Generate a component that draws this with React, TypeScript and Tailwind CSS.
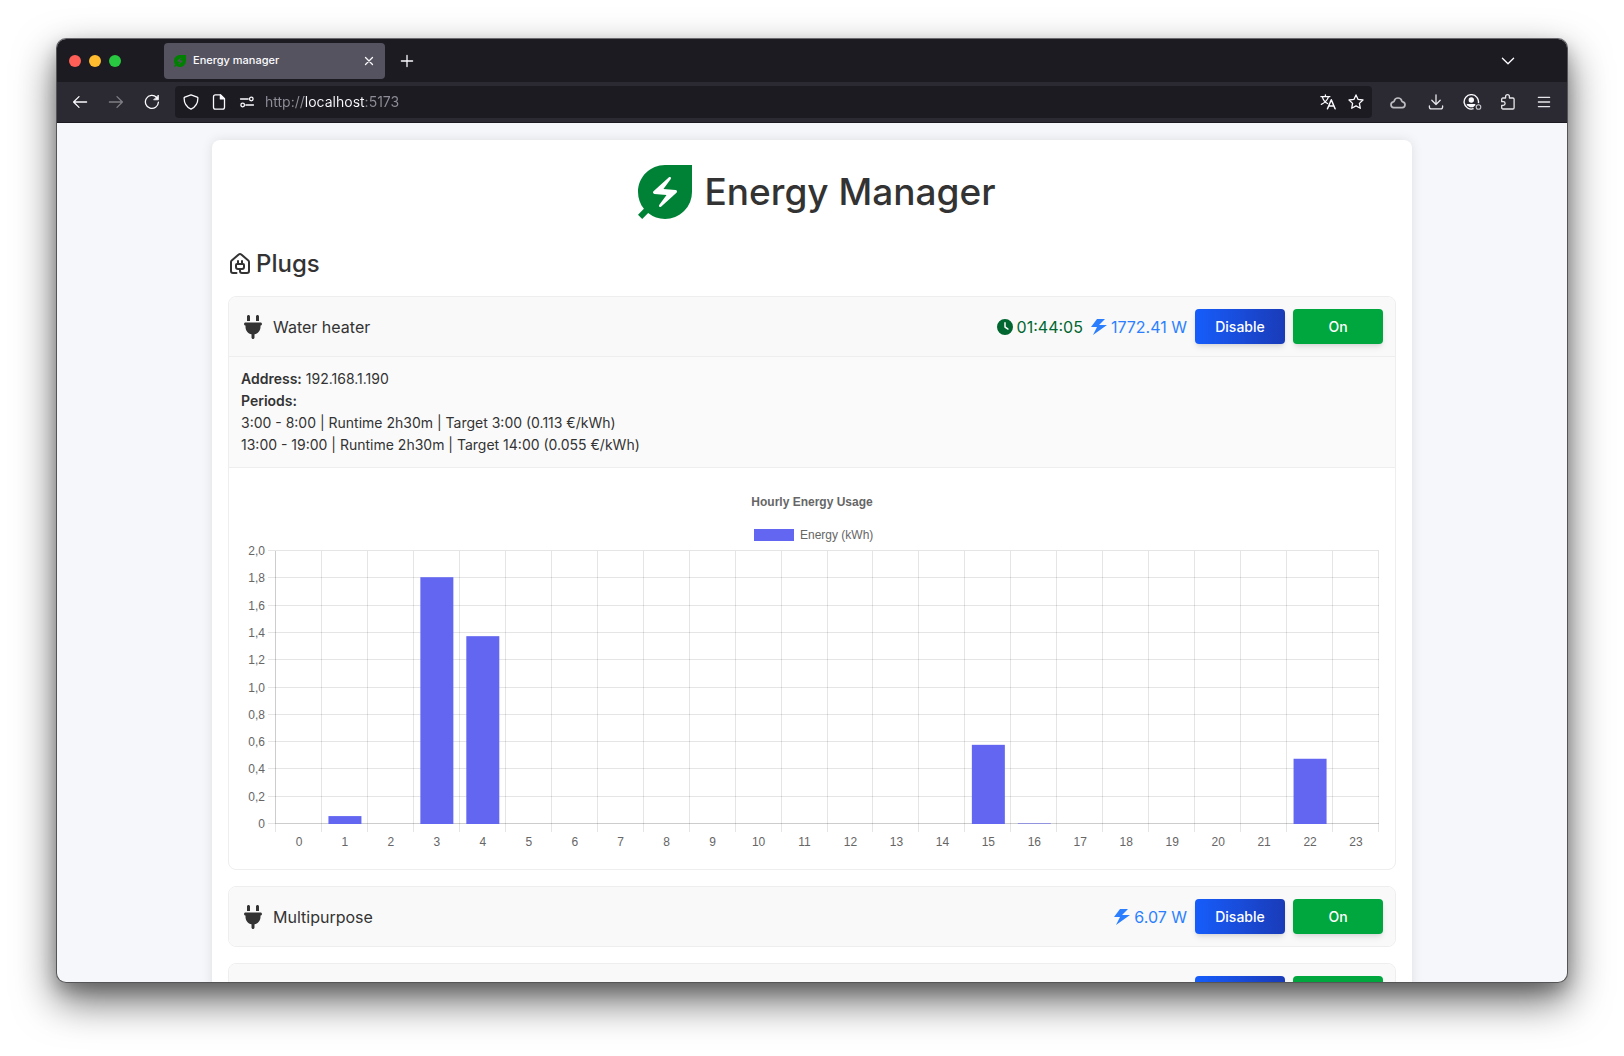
import { type ReactNode } from "react";
import { MdEnergySavingsLeaf } from "react-icons/md";
import { FaClock, FaPlug } from "react-icons/fa6";
import { ImPower } from "react-icons/im";
import { HousePlug } from "lucide-react";

function Glyph({ children, className = "" }: { children: ReactNode; className?: string }) {
  return (
    <svg
      viewBox="0 0 16 16"
      width="16"
      height="16"
      fill="none"
      stroke="currentColor"
      strokeWidth="1.3"
      strokeLinecap="round"
      strokeLinejoin="round"
      className={className}
      aria-hidden="true"
    >
      {children}
    </svg>
  );
}

function ToolButton({ label, children, className = "w-9" }: { label: string; children: ReactNode; className?: string }) {
  return (
    <button type="button" aria-label={label} className={`flex h-8 shrink-0 items-center justify-center text-[#fbfbfe] ${className}`}>
      {children}
    </button>
  );
}

function TabBar() {
  return (
    <div className="flex h-[43px] shrink-0 items-center bg-[#1c1b22] pl-3">
      <div className="flex w-[95px] shrink-0 gap-2">
        <button type="button" aria-label="Close window" className="size-3 rounded-full bg-[#ff5f57]" />
        <button type="button" aria-label="Minimise window" className="size-3 rounded-full bg-[#febc2e]" />
        <button type="button" aria-label="Zoom window" className="size-3 rounded-full bg-[#28c840]" />
      </div>
      <div className="flex h-9 w-[221px] items-center rounded bg-[#55535f] pr-2 pl-2">
        <MdEnergySavingsLeaf className="size-4 shrink-0 text-[#008000]" />
        <span className="ml-[5px] grow text-[11px] font-medium text-[#fbfbfe]">Energy manager</span>
        <button type="button" aria-label="Close tab" className="text-[#fbfbfe]">
          <Glyph>
            <path d="M4.5 4.5l7 7M11.5 4.5l-7 7" />
          </Glyph>
        </button>
      </div>
      <ToolButton label="New tab" className="ml-1 w-9">
        <Glyph>
          <path d="M8 2.4v11.2M2.4 8h11.2" />
        </Glyph>
      </ToolButton>
      <ToolButton label="List all tabs" className="mr-[41px] ml-auto w-9">
        <Glyph>
          <path d="M2.4 5.2L8 10.8l5.6-5.6" />
        </Glyph>
      </ToolButton>
    </div>
  );
}

function ToolBar() {
  return (
    <div className="flex h-[41px] shrink-0 items-center border-b border-[#1c1b22] bg-[#2b2a33] px-[5px]">
      <ToolButton label="Back">
        <Glyph>
          <path d="M14.6 8H1.8M7 2.6L1.6 8 7 13.4" />
        </Glyph>
      </ToolButton>
      <ToolButton label="Forward">
        <Glyph className="opacity-40">
          <path d="M1.4 8h12.8M9 2.6L14.4 8 9 13.4" />
        </Glyph>
      </ToolButton>
      <ToolButton label="Reload">
        <Glyph>
          <path d="M14.4 8.2A6.5 6.5 0 1 1 12.6 3.4" />
          <path d="M14.4 1.4v4.4H10z" fill="currentColor" strokeWidth="0.8" />
        </Glyph>
      </ToolButton>
      <div className="ml-[5px] flex h-8 min-w-0 grow items-center rounded bg-[#1c1b22] pr-2 pl-2 text-[#fbfbfe]">
        <button type="button" aria-label="Tracking protection">
          <Glyph>
            <path d="M8 .8l6.2 2.3c.5.2.7.5.7 1 0 5-2 8.9-6.9 11.1C3.1 13 1.1 9.1 1.1 4.1c0-.5.2-.8.7-1z" />
          </Glyph>
        </button>
        <button type="button" aria-label="Site information" className="ml-3">
          <Glyph>
            <path d="M9.6.9H4.4A1.9 1.9 0 0 0 2.5 2.8v10.4a1.9 1.9 0 0 0 1.9 1.9h7.2a1.9 1.9 0 0 0 1.9-1.9V4.8z" />
            <path d="M9.4 1v3.900h4z" fill="currentColor" />
          </Glyph>
        </button>
        <button type="button" aria-label="Permissions" className="ml-3">
          <Glyph>
            <path d="M1.5 5h7.700M6.800 11h7.700" />
            <circle cx="12.3" cy="5" r="1.8" />
            <circle cx="3.7" cy="11" r="1.8" />
          </Glyph>
        </button>
        <input
          type="text"
          aria-label="Address bar"
          defaultValue="http://localhost:5173"
          className="ml-2.5 min-w-0 grow bg-[linear-gradient(90deg,#8f8e98_39px,#fbfbfe_39px,#fbfbfe_100px,#8f8e98_100px)] bg-clip-text text-sm text-transparent outline-none"
        />
        <button type="button" aria-label="Translate page">
          <Glyph>
            <path d="M.9 2.6h9M5.4.9v1.7M2.4 2.8c.7 3 3.1 5.7 5.2 6.7M8.4 2.8C7.7 6 4.1 9.2 1.3 10.3" />
            <path d="M7.5 14.8l3.8-9 3.8 9M8.8 12h5" strokeWidth="1.5" />
          </Glyph>
        </button>
        <button type="button" aria-label="Bookmark page" className="ml-3">
          <Glyph>
            <path d="M8 .9l2.1 4.5 4.9.6-3.6 3.4.9 4.9L8 11.9l-4.3 2.4.9-4.9L1 6l4.9-.6z" />
          </Glyph>
        </button>
      </div>
      <div className="ml-1.5 flex shrink-0">
        <ToolButton label="Cloud storage" className="w-10">
          <Glyph className="opacity-70">
            <path d="M3.7 13.7a3 3 0 0 1-.4-5.900c.5 0 .8-.3.9-.8a3.900 3.900 0 0 1 7.600 0c.1.500.4.800.9.800a3 3 0 0 1-.4 5.900z" strokeWidth="1.7" />
          </Glyph>
        </ToolButton>
        <ToolButton label="Downloads">
          <Glyph className="opacity-90">
            <path d="M8 .8v9.600M3.800 6.300L8 10.500l4.200-4.200M1.400 12v.9a1.900 1.900 0 0 0 1.900 1.900h9.400a1.900 1.900 0 0 0 1.900-1.900V12" />
          </Glyph>
        </ToolButton>
        <ToolButton label="Account">
          <svg viewBox="0 0 19 16" width="19" height="16" fill="none" stroke="currentColor" strokeWidth="1.4" aria-hidden="true">
            <path d="M15.400 9.200A7.200 7.200 0 1 0 10.600 14.700" />
            <circle cx="8.3" cy="6" r="2.7" fill="currentColor" stroke="none" />
            <path d="M3.800 10h8.500v1.200L10 13.200H7l-3.200-2z" fill="currentColor" stroke="none" />
            <circle cx="15.5" cy="13" r="2.3" strokeWidth="1.1" opacity=".75" />
          </svg>
        </ToolButton>
        <ToolButton label="Extensions">
          <Glyph className="opacity-90">
            <path d="M1.700 6.300V5.200c0-.7.500-1.200 1.200-1.200h2.700V2.600a1.900 1.900 0 0 1 3.800 0V4h3.500c.7 0 1.200.5 1.200 1.200v8.600c0 .7-.5 1.200-1.200 1.200H2.900c-.7 0-1.200-.5-1.200-1.200v-2.500h1.600a1.800 1.800 0 0 0 0-3.600H1.700z" />
          </Glyph>
        </ToolButton>
        <ToolButton label="Open menu">
          <Glyph className="opacity-90">
            <path d="M2.400 3.400h11.200M2.400 8h11.200M2.400 12.600h11.200" />
          </Glyph>
        </ToolButton>
      </div>
    </div>
  );
}

type Plug = { name: string; timer?: string; power?: string };

function PlugHeader({ plug }: { plug: Plug }) {
  return (
    <header className="flex items-center gap-2 bg-[#f9f9f9] p-3">
      <FaPlug className="size-6 shrink-0" />
      <h3 className="grow text-base">{plug.name}</h3>
      {plug.timer && (
        <span className="flex items-center gap-1 text-green-800">
          <FaClock className="size-4" />
          {plug.timer}
        </span>
      )}
      {plug.power && (
        <span className="flex items-center gap-1 text-blue-500">
          <ImPower className="size-4" />
          {plug.power}
        </span>
      )}
      <button type="button" className="h-[35px] w-[90px] rounded bg-linear-to-r from-blue-600 to-blue-800 text-sm font-medium text-white shadow-md">
        Disable
      </button>
      <button type="button" className="h-[35px] w-[90px] rounded bg-green-600 text-sm font-medium text-white shadow-md">
        On
      </button>
    </header>
  );
}

const usage: Record<number, number> = { 1: 0.058, 3: 1.808, 4: 1.376, 15: 0.58, 16: 0.004, 22: 0.478 };
const hours = Array.from({ length: 24 }, (_, hour) => hour);
const steps = Array.from({ length: 11 }, (_, step) => step);

const plot = { left: 35, right: 1138, top: 71, bottom: 344, max: 2 };
const column = (plot.right - plot.left) / 24;
const barWidth = 33;

const xAt = (hour: number) => plot.left + hour * column;
const yAt = (value: number) => plot.bottom - (value / plot.max) * (plot.bottom - plot.top);
const crisp = (value: number) => Math.round(value) + 0.5;

function UsageChart() {
  return (
    <svg
      viewBox="0 0 1142 377"
      role="img"
      aria-label="Hourly Energy Usage"
      className="block h-auto w-full fill-[#666] font-['Liberation_Sans',sans-serif] text-[12px]"
    >
      <text x="571" y="26" textAnchor="middle" className="font-bold">
        Hourly Energy Usage
      </text>
      <rect x="513" y="49" width="40" height="12" fill="#6366f1" />
      <text x="559" y="59">
        Energy (kWh)
      </text>
      <g stroke="#000" strokeOpacity="0.1">
        {steps.map((step) => (
          <line key={step} x1={plot.left - 8} x2={plot.right} y1={crisp(yAt(step / 5) - 1)} y2={crisp(yAt(step / 5) - 1)} />
        ))}
        {[...hours, 24].map((hour) => (
          <line key={hour} x1={crisp(xAt(hour) - 1)} x2={crisp(xAt(hour) - 1)} y1={plot.top} y2={plot.bottom + 8} />
        ))}
        <line x1={plot.left - 0.5} x2={plot.left - 0.5} y1={plot.top} y2={plot.bottom} />
        <line x1={plot.left} x2={plot.right} y1={plot.bottom - 0.5} y2={plot.bottom - 0.5} />
      </g>
      {hours
        .filter((hour) => usage[hour])
        .map((hour) => (
          <rect
            key={hour}
            x={xAt(hour) + (column - barWidth) / 2}
            y={yAt(usage[hour])}
            width={barWidth}
            height={plot.bottom - yAt(usage[hour])}
            fill="#6366f1"
          />
        ))}
      {steps.map((step) => (
        <text key={step} x={plot.left - 11} y={yAt(step / 5) + 4} textAnchor="end">
          {step === 0 ? "0" : (step / 5).toFixed(1).replace(".", ",")}
        </text>
      ))}
      {hours.map((hour) => (
        <text key={hour} x={xAt(hour) + column / 2} y={plot.bottom + 22} textAnchor="middle">
          {hour}
        </text>
      ))}
    </svg>
  );
}

function PlugCard({ plug, children }: { plug: Plug; children?: ReactNode }) {
  return (
    <article className="overflow-hidden rounded-lg border border-[#eee]">
      <PlugHeader plug={plug} />
      {children}
    </article>
  );
}

export default function App() {
  return (
    <div className="flex h-screen flex-col bg-white px-14 pt-[38px] pb-[73px] font-['Inter',sans-serif] text-[#333]">
      <div className="flex min-h-0 grow flex-col overflow-hidden rounded-[10px] border border-[#555] border-t-[#6a6a6e] bg-[#f6f7fb] shadow-[0_18px_40px_rgba(0,0,0,0.6),0_8px_16px_rgba(0,0,0,0.2)]">
        <TabBar />
        <ToolBar />
        <div className="min-h-0 grow overflow-hidden px-6 pt-[17px]">
          <main className="mx-auto max-w-[1200px] rounded-lg bg-white p-4 shadow-[0_0_12px_rgba(0,0,0,0.1)]">
            <h1 className="flex items-center justify-center gap-1 text-[37px] font-medium">
              <MdEnergySavingsLeaf className="size-[72px] text-green-700" />
              Energy Manager
            </h1>
            <h2 className="mt-5 mb-4 flex items-center gap-1 text-2xl font-medium">
              <HousePlug className="size-6" />
              Plugs
            </h2>
            <div className="flex flex-col gap-4">
              <PlugCard plug={{ name: "Water heater", timer: "01:44:05", power: "1772.41 W" }}>
                <div className="border-y border-[#eee] bg-[#fafafa] px-3 py-[11px] text-sm leading-[22px]">
                  <p>
                    <strong className="font-semibold">Address:</strong> 192.168.1.190
                  </p>
                  <p>
                    <strong className="font-semibold">Periods:</strong>
                  </p>
                  <p>3:00 - 8:00 | Runtime 2h30m | Target 3:00 (0.113 €/kWh)</p>
                  <p>13:00 - 19:00 | Runtime 2h30m | Target 14:00 (0.055 €/kWh)</p>
                </div>
                <div className="p-3">
                  <UsageChart />
                </div>
              </PlugCard>
              <PlugCard plug={{ name: "Multipurpose", power: "6.07 W" }} />
              <PlugCard plug={{ name: "" }} />
            </div>
          </main>
        </div>
      </div>
    </div>
  );
}
